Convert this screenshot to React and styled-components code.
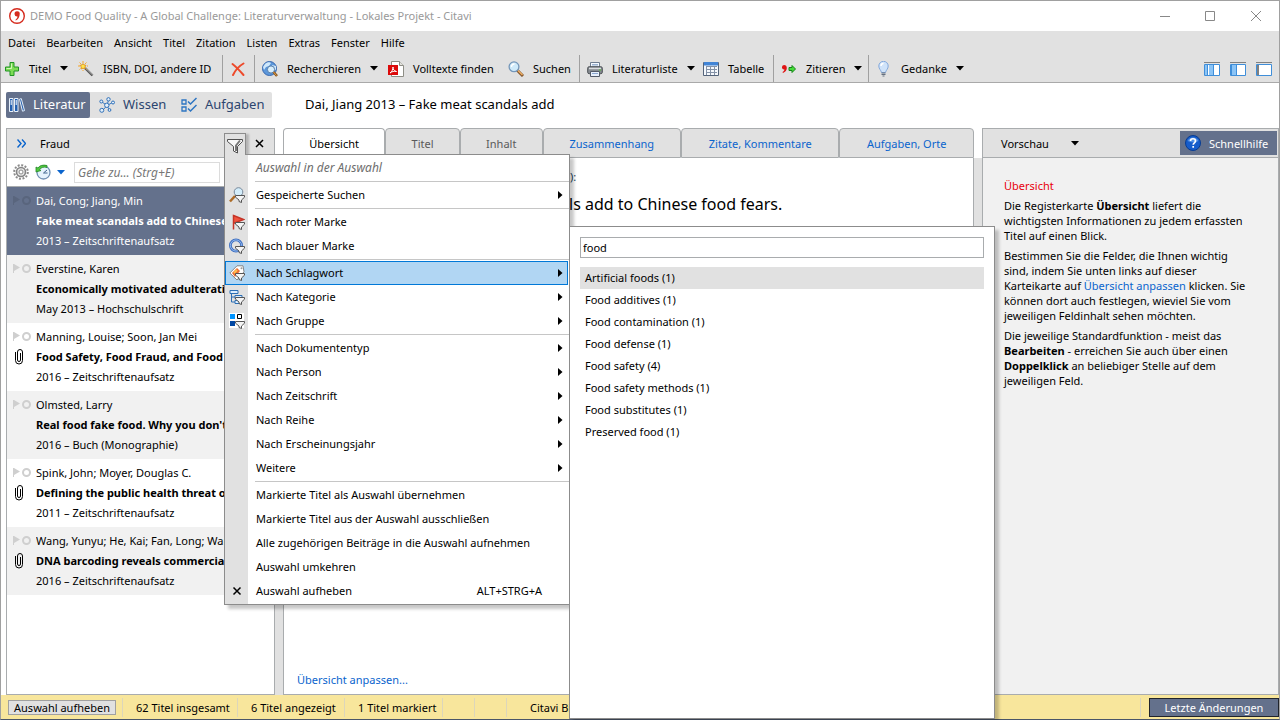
import React from "react";
import styled, { createGlobalStyle } from "styled-components";

const GlobalStyle = createGlobalStyle`
  * {
    box-sizing: border-box;
  }
  body {
    margin: 0;
    overflow: hidden;
    font-family: "Noto Sans", "Open Sans", sans-serif;
    font-size: 11px;
    line-height: 15px;
    color: #000;
    background: #fff;
  }
  button, input {
    font: inherit;
    color: inherit;
    margin: 0;
    padding: 0;
    border: 0;
    background: none;
    text-align: left;
    white-space: nowrap;
  }
  svg {
    display: block;
    flex: none;
  }
  a {
    color: #0a64cd;
    text-decoration: none;
  }
`;

const Window = styled.div`
  display: flex;
  flex-direction: column;
  height: 100vh;
  border: 1px solid #a0a0a0;
  border-bottom-color: #4a5568;
`;

const TitleBar = styled.header`
  display: flex;
  align-items: center;
  gap: 4px;
  flex: 0 0 30px;
  padding: 0 17px 1px 7px;
  color: #999;
`;

const WindowTitle = styled.h1`
  flex: 1;
  margin: 0;
  font-size: 11px;
  font-weight: 400;
`;

const WindowButtons = styled.div`
  display: flex;
  gap: 34px;
`;

const MenuBar = styled.nav`
  display: flex;
  align-items: center;
  gap: 11px;
  flex: 0 0 24px;
  padding: 0 0 2px 7px;
  background: #e1e1e1;
`;

const ToolBar = styled.div`
  display: flex;
  align-items: center;
  flex: 0 0 28px;
  padding: 0 7px 0 3px;
  background: #e1e1e1;
  border-bottom: 1px solid #a9a9a9;
`;

const Tool = styled.button`
  display: flex;
  align-items: center;
  gap: 9px;
  flex: 0 0 ${(p) => p.$width}px;
  height: 26px;
`;

const ToolSeparator = styled.span`
  align-self: stretch;
  width: 1px;
  margin-right: 7px;
  background: #a0a0a0;
`;

const LayoutButtons = styled.div`
  display: flex;
  gap: 10px;
  margin-left: auto;
`;

const NavRow = styled.div`
  display: flex;
  align-items: center;
  flex: 0 0 45px;
  padding: 0 5px 2px;
`;

const Switcher = styled.div`
  display: flex;
  width: 266px;
  height: 26px;
  border-radius: 2px;
  background: #e1e1e1;
`;

const SwitchButton = styled.button`
  display: flex;
  align-items: center;
  gap: 8px;
  flex: 0 0 ${(p) => p.$width}px;
  padding-left: ${(p) => (p.$active ? 3 : 9)}px;
  border-radius: 2px;
  font-size: 13px;
  color: ${(p) => (p.$active ? "#fff" : "#2c456f")};
  background: ${(p) => (p.$active ? "#64718c" : "transparent")};
`;

const RecordHeading = styled.h2`
  margin: 0 0 0 33px;
  font-size: 13px;
  font-weight: 400;
`;

const Workspace = styled.div`
  display: flex;
  flex: 1;
  min-height: 0;
  padding-left: 5px;
`;

const Sidebar = styled.aside`
  display: flex;
  flex-direction: column;
  flex: 0 0 269px;
  border: 1px solid #a9acae;
`;

const PanelHeader = styled.div`
  display: flex;
  align-items: center;
  flex: 0 0 29px;
  background: #e1e1e1;
  border-bottom: 1px solid #a9acae;
`;

const SidebarHeader = styled(PanelHeader)`
  padding: 0 10px;
`;

const SidebarTitle = styled.span`
  flex: 1;
  margin-left: 14px;
`;

const FilterAnchor = styled.div`
  position: relative;
  z-index: 5;
  align-self: flex-end;
  margin-right: 9px;
`;

const FilterButton = styled.button`
  display: flex;
  align-items: center;
  justify-content: center;
  width: 22px;
  height: 24px;
  border: 1px solid #8c8c8c;
  border-bottom: 0;
  background: #e1e1e1;
  box-shadow: 3px 1px 2px rgba(0, 0, 0, 0.2);
`;

const SearchRow = styled.div`
  display: flex;
  align-items: center;
  gap: 6px;
  flex: 0 0 29px;
  padding: 0 6px;
  border-bottom: 1px solid #a9acae;
`;

const GoTo = styled.input`
  width: 146px;
  height: 21px;
  margin-left: 3px;
  padding: 0 3px;
  border: 1px solid #dcdcdc;
  font-size: 12px;
  font-style: italic;
  background: #fff;
  &::placeholder {
    color: #777;
    opacity: 1;
  }
`;

const TitleList = styled.ul`
  flex: 1;
  margin: 0;
  padding: 0;
  list-style: none;
  overflow: hidden;
`;

const TitleItem = styled.li`
  display: grid;
  grid-template-columns: 23px 1fr;
  padding: 4px 0 4px 6px;
  line-height: 20px;
  color: ${(p) => (p.$selected ? "#fff" : "#000")};
  background: ${(p) => (p.$selected ? "#64718c" : p.$shaded ? "#f1f1f1" : "#fff")};
`;

const Marks = styled.div`
  display: flex;
  flex-direction: column;
  gap: 6px;
  padding-top: 4px;
`;

const TitleText = styled.div`
  min-width: 0;
  overflow: hidden;
  white-space: nowrap;
`;

const Strong = styled.div`
  font-weight: 700;
`;

const Splitter = styled.div`
  flex: 0 0 8px;
  margin-top: 30px;
  background: #e1e1e1;
`;

const Main = styled.main`
  display: flex;
  flex-direction: column;
  flex: 1;
  min-width: 0;
`;

const Tabs = styled.div`
  display: flex;
  flex: 0 0 30px;
`;

const Tab = styled.button`
  flex: ${(p) => p.$grow} 1 0;
  border: 1px solid #a9acae;
  border-bottom-color: ${(p) => (p.$active ? "#fff" : "#a9acae")};
  border-radius: 4px 4px 0 0;
  text-align: center;
  color: ${(p) => (p.$active ? "#000" : p.$link ? "#0a64cd" : "#5a5a5a")};
  background: ${(p) => (p.$active ? "#fff" : "#e1e1e1")};
`;

const TabBody = styled.div`
  display: flex;
  flex-direction: column;
  justify-content: space-between;
  flex: 1;
  padding: 11px 13px 7px;
  border: 1px solid #a9acae;
  border-top: 0;
`;

const RecordType = styled.div`
  margin-bottom: 8px;
  color: #1c3f5c;
  white-space: nowrap;
`;

const RecordTitle = styled.div`
  font-size: 16px;
  line-height: 24px;
  white-space: nowrap;
`;

const HelpPanel = styled.aside`
  display: flex;
  flex-direction: column;
  flex: 0 0 297px;
  border: 1px solid #a9acae;
  background: #f1f1f1;
`;

const PreviewButton = styled.button`
  display: flex;
  align-items: center;
  gap: 22px;
  margin-left: 18px;
`;

const HelpButton = styled.button`
  display: flex;
  align-items: center;
  gap: 8px;
  width: 97px;
  height: 24px;
  margin: 0 1px 0 auto;
  padding-left: 5px;
  color: #fff;
  background: #64718c;
`;

const HelpText = styled.div`
  padding: 20px 25px 0 21px;
  h3 {
    margin: 0 0 5px;
    font-size: 11px;
    font-weight: 400;
    color: #e8000b;
  }
  p {
    margin: 0 0 5px;
  }
`;

const StatusBar = styled.footer`
  display: flex;
  align-items: center;
  flex: 0 0 24px;
  background: #f8e69c;
`;

const ClearButton = styled.button`
  width: 108px;
  height: 15px;
  margin: 0 6px 0 7px;
  border: 1px solid #a0a0a0;
  line-height: 13px;
  text-align: center;
  background: #e1e1e1;
`;

const StatusCell = styled.span`
  flex: 0 0 ${(p) => p.$width}px;
  height: 19px;
  padding-left: ${(p) => p.$indent || 13}px;
  border-left: 1px solid #dcd6bb;
  line-height: 19px;
  white-space: nowrap;
`;

const StatusSpacer = styled.span`
  flex: 1;
  height: 19px;
  margin-right: 8px;
  border-right: 1px solid #dcd6bb;
`;

const RecentButton = styled.button`
  width: 130px;
  height: 19px;
  border: 1px solid #20242c;
  text-align: center;
  color: #fff;
  background: #64718c;
`;

const Popup = styled.div`
  position: absolute;
  border: 1px solid #8c8c8c;
  background: #fff;
  box-shadow: 4px 4px 3px rgba(0, 0, 0, 0.22);
`;

const Menu = styled(Popup)`
  top: 21px;
  left: 0;
  width: 346px;
  padding: 1px 0;
  background: linear-gradient(90deg, #e1e1e1 23px, #fff 23px);
`;

/* Hides the menu border below the open button */
const MenuJoint = styled.span`
  position: absolute;
  top: -1px;
  left: 0;
  width: 20px;
  height: 1px;
  background: #e1e1e1;
`;

const MenuItem = styled.button`
  display: grid;
  grid-template-columns: 31px 1fr auto 9px;
  align-items: center;
  width: 343px;
  height: 24px;
  padding: 0 1px 2px 0;
  color: ${(p) => (p.$muted ? "#6d6d6d" : "#000")};
  font-size: ${(p) => (p.$muted ? 12 : 11)}px;
  font-style: ${(p) => (p.$muted ? "italic" : "normal")};
  background: ${(p) => (p.$active ? "#b1d6f3" : "transparent")};
  outline: ${(p) => (p.$active ? "1px solid #0078d7" : "none")};
  outline-offset: -1px;
`;

const MenuIcon = styled.span`
  padding: 1px 0 0 4px;
`;

const Shortcut = styled.span`
  padding-right: 16px;
`;

const MenuLine = styled.hr`
  height: 1px;
  margin: 1px 0 1px 30px;
  border: 0;
  background: #c6c6c6;
`;

const Submenu = styled(Popup)`
  top: 71px;
  left: 344px;
  width: 426px;
  min-height: 493px;
  padding: 10px;
`;

const KeywordInput = styled.input`
  width: 100%;
  height: 21px;
  padding: 0 2px;
  border: 1px solid #a9acae;
`;

const KeywordList = styled.ul`
  margin: 9px 0 0;
  padding: 0;
  list-style: none;
`;

const Keyword = styled.li`
  height: 22px;
  padding-left: 5px;
  line-height: 22px;
  background: ${(p) => (p.$active ? "#e1e1e1" : "#fff")};
`;

const Icon = ({ size = 16, children }) => (
  <svg width={size} height={size} viewBox="0 0 16 16" fill="none" aria-hidden="true">
    {children}
  </svg>
);

const Arrow = ({ color = "#000" }) => (
  <svg width="8" height="5" viewBox="0 0 8 5" aria-hidden="true">
    <path d="M0 0h8L4 4.5z" fill={color} />
  </svg>
);

const Funnel = () => (
  <path d="M6.5 8.5h9v1.7L12.500 13v2.500l-2.500-1V13L6.500 10.200z" fill="#f4f4f4" stroke="#555" />
);

const LogoIcon = () => (
  <svg width="18" height="18" viewBox="0 0 18 18" fill="none" aria-hidden="true">
    <circle cx="9" cy="9" r="7.3" stroke="#d52b1e" strokeWidth="1.4" />
    <path d="M9 4.2a2.6 2.6 0 0 1 2.7 2.9c0 3-1.4 5.3-3.9 6.5l-.4-.7c1.3-1 2-2.1 2.1-3.3A2.7 2.7 0 1 1 9 4.2z" fill="#d52b1e" />
  </svg>
);

const PlusIcon = () => (
  <Icon>
    <path d="M6 1.500h4v4.500h4.500v4H10v4.500H6V10H1.500V6H6z" fill="#7ddc55" stroke="#209425" />
    <path d="M7.500 2.500v5h-5" stroke="#d2f7b8" />
  </Icon>
);

const WandIcon = () => (
  <Icon>
    <path d="M7 7l7.500 7.500" stroke="#555" strokeWidth="2.400" />
    <path d="M7 6.400l7.500 7.500" stroke="#b9b9b9" />
    <path d="M5 0v10M0 5h10M1.500 1.500l7 7M8.500 1.500l-7 7" stroke="#f6a72d" strokeDasharray="2 1" />
    <path d="M5 2.500L6 4l2 .300L6.800 6 7 8 5 7.200 3 8l.300-2L2 4.300 4 4z" fill="#ffe34d" stroke="#d27a0c" strokeWidth=".600" />
  </Icon>
);

const DeleteIcon = () => (
  <Icon>
    <path d="M2.500 3C6 5.500 10 10 13.500 14M13.500 2.500C9 5 5 10 3 14" stroke="#ed4a2b" strokeWidth="2" strokeLinecap="round" />
  </Icon>
);

const GlobeIcon = () => (
  <Icon>
    <circle cx="7.500" cy="7.500" r="7" fill="#5c97da" stroke="#3867ae" />
    <path d="M3 3c2-2 5-2 6-1L7 5 4 6 2 9 1 6zM10 4l4 1v4l-3-1z" fill="#cfe8fb" />
    <circle cx="9" cy="8.500" r="3.600" fill="#d9effc" stroke="#587da9" />
    <path d="M11.500 11l3.500 4" stroke="#845219" strokeWidth="2.500" />
    <path d="M11.500 11l3 3.500" stroke="#e8a24b" />
  </Icon>
);

const PdfIcon = () => (
  <Icon>
    <path d="M3.500 .500h8l4 4v11h-12z" fill="#fff" stroke="#8e8e86" />
    <path d="M11.500 .500v4h4" fill="#e3e3de" stroke="#8e8e86" />
    <path d="M0 4h10v10H0z" fill="#dc0a0a" />
    <path d="M2 12c2-1.500 3-3.500 3-6 0 2.500 1 4 3.500 4.500C6 10 4 10.500 2 12z" stroke="#fff" />
  </Icon>
);

const SearchIcon = () => (
  <Icon>
    <path d="M9 9l6 6" stroke="#80542b" strokeWidth="3" />
    <path d="M9.500 9l5 5" stroke="#efb066" strokeWidth="1.400" />
    <circle cx="6" cy="5.800" r="4.900" fill="#cfeafa" stroke="#7496b9" strokeWidth="1.300" />
    <path d="M3.500 6c0-2 1.500-3 3-3" stroke="#fff" strokeWidth="1.300" />
  </Icon>
);

const PrinterIcon = () => (
  <Icon>
    <path d="M3.500 1.500h9v5h-9z" fill="#f4f9ff" stroke="#6f7d91" />
    <path d="M5 3.500h6M5 5h6" stroke="#9cb3d1" />
    <rect x=".7" y="5.700" width="14.600" height="7" rx="1.500" fill="#868b91" stroke="#4d5156" />
    <path d="M2 7.500h12" stroke="#dadde0" strokeWidth="1.500" />
    <path d="M12 9h2" stroke="#4fc52d" />
    <path d="M3.500 10.500h9v5h-9z" fill="#e5eefb" stroke="#525a68" />
    <path d="M5 12.500h6" stroke="#8ba7cf" />
  </Icon>
);

const TableIcon = () => (
  <Icon>
    <path d="M.500 1.500h15v13H.500z" fill="#f5f8fc" stroke="#53637a" />
    <path d="M1 1h14v3.500H1z" fill="#4184d6" />
    <path d="M3 5.500h11M3 8.500h11M3 11.500h11M3.500 5v9M7.500 5v9M11.500 5v9" stroke="#8492a7" />
  </Icon>
);

const CiteIcon = () => (
  <Icon>
    <path d="M3 4c1.800 0 2.800 1.200 2.800 3C5.800 9.300 4.500 11 2 12l-.500-1c1.300-.700 1.900-1.500 1.900-2.500A2.200 2.200 0 1 1 3 4z" fill="#df1515" />
    <path d="M8 6.500h3v-2L14.500 8 11 11.500v-2H8z" fill="#46dc39" stroke="#138416" />
  </Icon>
);

const BulbIcon = () => (
  <Icon>
    <path d="M5.500 11.500C5 9 2.800 8 2.800 5a4.700 4.700 0 0 1 9.400 0c0 3-2.200 4-2.700 6.500z" fill="#cfe3fa" stroke="#84a9dc" />
    <path d="M5 5c0-1.500 1-2.500 2.500-2.500" stroke="#fff" strokeWidth="1.500" />
    <path d="M5.500 12h4M5.500 13.500h4M6.500 15h2" stroke="#657080" />
  </Icon>
);

const LayoutIcon = ({ columns }) => (
  <Icon>
    <path d="M.500 3.500h15v11H.500z" fill="#fff" stroke="#3f8ed9" />
    <path d="M0 1.500h16" stroke="#808080" />
    <path d="M1 2.500h14" stroke="#e1e1e1" />
    {columns === 3 && <path d="M1 4h3v10H1zM5 4h4v10H5z" fill="#8bc4f6" />}
    {columns === 3 && <path d="M3.500 4v10M9.500 4v10" stroke="#3f8ed9" />}
    {columns === 2 && <path d="M2 4h4v10H2z" fill="#8bc4f6" />}
    {columns === 2 && <path d="M1.500 4v10M6.500 4v10" stroke="#3f8ed9" />}
    {columns === 1 && <path d="M2 4v10" stroke="#808080" strokeWidth="2" />}
  </Icon>
);

const BooksIcon = () => (
  <Icon>
    <path d="M.500 1.500H4v13H.500zM5.500 1.500H9v13H5.500z" fill="#245fae" stroke="#e6f0fb" />
    <path d="M10.500 2.200l1.800-.600 3.200 12-2 .600z" fill="#245fae" stroke="#e6f0fb" />
    <path d="M2.200 3v5M7.200 3v5" stroke="#fff" />
  </Icon>
);

const KnowledgeIcon = () => (
  <Icon>
    <path d="M3 5l5 3.500L9.500 3M8 8.500l5.500-3M8 8.500L4 13M8 8.500l2 4" stroke="#3c79bd" />
    <g fill="#e4f0fa" stroke="#2f70b9">
      <circle cx="2.300" cy="4.500" r="1.500" />
      <circle cx="9.500" cy="2.300" r="1.700" />
      <circle cx="14" cy="5.500" r="1.500" />
      <circle cx="7.800" cy="8.300" r="2.200" />
      <circle cx="2.800" cy="13.300" r="2" />
      <circle cx="10.500" cy="13" r="1.400" />
    </g>
  </Icon>
);

const TasksIcon = () => (
  <Icon>
    <path d="M1 3h4v4H1zM1 10h4v4H1z" stroke="#2d75c2" strokeWidth="1.300" />
    <path d="M7 4.500l2.500 2.500L15.500 1M7 11.500l2.500 2.500 6-6" stroke="#2d75c2" strokeWidth="1.500" />
  </Icon>
);

const GearIcon = () => (
  <Icon>
    <circle cx="8" cy="8" r="6.800" stroke="#8b8b8b" strokeWidth="2" strokeDasharray="2 1.560" />
    <circle cx="8" cy="8" r="4.500" fill="#e7e7e7" stroke="#858585" strokeWidth="1.600" />
    <circle cx="8" cy="8" r="2" fill="#fff" stroke="#8b8b8b" />
  </Icon>
);

const HistoryIcon = () => (
  <Icon>
    <circle cx="8.500" cy="8.500" r="6.500" fill="#e5f3fd" stroke="#7191b4" strokeWidth="1.300" />
    <path d="M8.500 9l3.500-3M8.500 9h4" stroke="#41668e" />
    <path d="M12 1.500C8 .500 4.500 1.500 3 4L1 3v5l5-1.500-1.500-1C6 3.500 9 2.500 12 3.500z" fill="#51c83d" stroke="#24862a" strokeWidth=".800" />
  </Icon>
);

const FilterIcon = () => (
  <Icon>
    <path d="M.500 1.500h15v2l-5 5V15l-4-2V8.500l-6-5z" fill="#f7f7f7" stroke="#505050" />
    <path d="M13 2.500L9 7.500V13" stroke="#777" strokeWidth="2" />
  </Icon>
);

const CloseIcon = () => (
  <svg width="9" height="9" viewBox="0 0 9 9" aria-hidden="true">
    <path d="M1 1l7 7M8 1L1 8" stroke="#000" strokeWidth="1.500" />
  </svg>
);

const HelpIcon = () => (
  <Icon>
    <circle cx="8" cy="8" r="7.500" fill="#165ccb" stroke="#073c93" />
    <path d="M2.500 6a6 6 0 0 1 11 0c-3 1.500-7 2-11 0z" fill="#6ca7ef" opacity=".7" />
    <path d="M5.500 6c0-3 5-3 5 0 0 2-2.300 1.700-2.300 3.800M8.200 11v1.800" stroke="#fff" strokeWidth="1.700" />
  </Icon>
);

const SavedSearchIcon = () => (
  <Icon>
    <path d="M6 9l-5 5.500" stroke="#ad6c27" strokeWidth="2.500" />
    <circle cx="9.500" cy="5" r="4.300" fill="#d3edfa" stroke="#77889b" />
    <Funnel />
  </Icon>
);

const RedFlagIcon = () => (
  <Icon>
    <path d="M4.500 1.500v14M4.500 1.500l10 4-10 4z" fill="#f0533e" stroke="#c63427" strokeWidth="1.500" />
    <Funnel />
  </Icon>
);

const BlueMarkIcon = () => (
  <Icon>
    <circle cx="7" cy="7.500" r="5.600" stroke="#3f6fc0" strokeWidth="2.800" />
    <circle cx="7" cy="7.500" r="5.600" stroke="#92b9ef" />
    <Funnel />
  </Icon>
);

const KeywordIcon = () => (
  <Icon>
    <path d="M.800 8L8 .800h6l1 6L8 15z" fill="#fff" stroke="#858585" />
    <path d="M3 8l5-5 3 3-5 6z" fill="#f06b31" />
    <path d="M5 8l3-3" stroke="#ffc04d" strokeWidth="2" />
    <circle cx="12.500" cy="3.300" r="1" fill="#999" />
    <Funnel />
  </Icon>
);

const CategoryIcon = () => (
  <Icon>
    <path d="M1 1.500h8v3H1zM6 6.500h7v3H6zM6 11.500h6v3H6z" fill="#dceeff" stroke="#2c6fb5" />
    <path d="M2.500 5v8H6M2.500 8H6" stroke="#2c6fb5" />
    <Funnel />
  </Icon>
);

const GroupIcon = () => (
  <Icon>
    <path d="M0 0h15v15H0z" fill="#fff" />
    <path d="M1 1h5v5H1z" fill="#0094ff" />
    <path d="M8.500 1.500h4v4h-4z" stroke="#000" />
    <path d="M1 8h5v5H1z" fill="#0047a3" />
    <Funnel />
  </Icon>
);

const ClearIcon = () => (
  <Icon>
    <path d="M4.500 4.500l7 7M11.500 4.500l-7 7" stroke="#000" strokeWidth="1.500" />
  </Icon>
);

const MarkIcon = ({ selected }) => (
  <svg width="20" height="11" viewBox="0 0 20 11" fill="none" aria-hidden="true">
    <path d="M.500 1v9" stroke={selected ? "#59657d" : "#cfcfcf"} />
    <path d="M1 1l6 3.500L1 8z" fill={selected ? "#59657d" : "#cfcfcf"} />
    <circle cx="13.500" cy="5.500" r="3.500" stroke={selected ? "#59657d" : "#cfcfcf"} strokeWidth="2" />
  </svg>
);

const ClipIcon = () => (
  <svg width="12" height="17" viewBox="0 0 12 17" fill="none" aria-hidden="true">
    <path d="M2.500 4v8.500a3.500 3.500 0 0 0 7 0V4a2.500 2.500 0 0 0-5 0v8a1.500 1.500 0 0 0 3 0V5" stroke="#000" />
  </svg>
);

const menus = ["Datei", "Bearbeiten", "Ansicht", "Titel", "Zitation", "Listen", "Extras", "Fenster", "Hilfe"];

const tools = [
  { label: "Titel", icon: <PlusIcon />, width: 74, arrow: true },
  { label: "ISBN, DOI, andere ID", icon: <WandIcon />, width: 144 },
  { separator: true },
  { name: "Löschen", icon: <DeleteIcon />, width: 24 },
  { separator: true },
  { label: "Recherchieren", icon: <GlobeIcon />, width: 126, arrow: true },
  { label: "Volltexte finden", icon: <PdfIcon />, width: 120 },
  { label: "Suchen", icon: <SearchIcon />, width: 71 },
  { separator: true },
  { label: "Literaturliste", icon: <PrinterIcon />, width: 116, arrow: true },
  { label: "Tabelle", icon: <TableIcon />, width: 70 },
  { separator: true },
  { label: "Zitieren", icon: <CiteIcon />, width: 87, arrow: true },
  { separator: true },
  { label: "Gedanke", icon: <BulbIcon />, width: 96, arrow: true },
];

const titles = [
  { author: "Dai, Cong; Jiang, Min", title: "Fake meat scandals add to Chinese food", info: "2013 – Zeitschriftenaufsatz" },
  { author: "Everstine, Karen", title: "Economically motivated adulteration", info: "May 2013 – Hochschulschrift" },
  { author: "Manning, Louise; Soon, Jan Mei", title: "Food Safety, Food Fraud, and Food", info: "2016 – Zeitschriftenaufsatz", clip: true },
  { author: "Olmsted, Larry", title: "Real food fake food. Why you don't", info: "2016 – Buch (Monographie)" },
  { author: "Spink, John; Moyer, Douglas C.", title: "Defining the public health threat of", info: "2011 – Zeitschriftenaufsatz", clip: true },
  { author: "Wang, Yunyu; He, Kai; Fan, Long; Wang", title: "DNA barcoding reveals commercial", info: "2016 – Zeitschriftenaufsatz", clip: true },
];

const tabs = [
  { label: "Übersicht", grow: 102, active: true },
  { label: "Titel", grow: 74 },
  { label: "Inhalt", grow: 82 },
  { label: "Zusammenhang", grow: 139, link: true },
  { label: "Zitate, Kommentare", grow: 159, link: true },
  { label: "Aufgaben, Orte", grow: 135, link: true },
];

const menuItems = [
  { label: "Auswahl in der Auswahl", muted: true },
  { line: true },
  { label: "Gespeicherte Suchen", icon: <SavedSearchIcon />, sub: true },
  { line: true },
  { label: "Nach roter Marke", icon: <RedFlagIcon /> },
  { label: "Nach blauer Marke", icon: <BlueMarkIcon /> },
  { line: true },
  { label: "Nach Schlagwort", icon: <KeywordIcon />, sub: true, active: true },
  { label: "Nach Kategorie", icon: <CategoryIcon />, sub: true },
  { label: "Nach Gruppe", icon: <GroupIcon />, sub: true },
  { line: true },
  { label: "Nach Dokumententyp", sub: true },
  { label: "Nach Person", sub: true },
  { label: "Nach Zeitschrift", sub: true },
  { label: "Nach Reihe", sub: true },
  { label: "Nach Erscheinungsjahr", sub: true },
  { label: "Weitere", sub: true },
  { line: true },
  { label: "Markierte Titel als Auswahl übernehmen" },
  { label: "Markierte Titel aus der Auswahl ausschließen" },
  { label: "Alle zugehörigen Beiträge in die Auswahl aufnehmen" },
  { label: "Auswahl umkehren" },
  { label: "Auswahl aufheben", icon: <ClearIcon />, shortcut: "ALT+STRG+A" },
];

const keywords = [
  "Artificial foods (1)",
  "Food additives (1)",
  "Food contamination (1)",
  "Food defense (1)",
  "Food safety (4)",
  "Food safety methods (1)",
  "Food substitutes (1)",
  "Preserved food (1)",
];

const FilterMenu = () => (
  <Menu>
    <MenuJoint />
    {menuItems.map((item, i) =>
      item.line ? (
        <MenuLine key={i} />
      ) : (
        <MenuItem key={i} $muted={item.muted} $active={item.active}>
          <MenuIcon>{item.icon}</MenuIcon>
          <span>{item.label}</span>
          <Shortcut>{item.shortcut}</Shortcut>
          {item.sub && (
            <svg width="5" height="9" viewBox="0 0 5 9" aria-hidden="true">
              <path d="M0 1l4.500 4L0 9z" fill="#000" />
            </svg>
          )}
        </MenuItem>
      )
    )}
    <Submenu>
      <KeywordInput aria-label="Schlagwort" defaultValue="food" />
      <KeywordList>
        {keywords.map((word, i) => (
          <Keyword key={word} $active={i === 0}>
            {word}
          </Keyword>
        ))}
      </KeywordList>
    </Submenu>
  </Menu>
);

const App = () => {
  return (
    <>
      <GlobalStyle />
      <Window>
        <TitleBar>
          <LogoIcon />
          <WindowTitle>DEMO Food Quality - A Global Challenge: Literaturverwaltung - Lokales Projekt - Citavi</WindowTitle>
          <WindowButtons>
            <button aria-label="Minimieren">
              <svg width="12" height="12" viewBox="0 0 12 12"><path d="M1 6.500h10" stroke="#888" /></svg>
            </button>
            <button aria-label="Maximieren">
              <svg width="11" height="12" viewBox="0 0 11 12"><path d="M.500 1.500h9v9h-9z" fill="none" stroke="#888" /></svg>
            </button>
            <button aria-label="Schließen">
              <svg width="12" height="12" viewBox="0 0 12 12"><path d="M1 1l10 10M11 1L1 11" stroke="#888" /></svg>
            </button>
          </WindowButtons>
        </TitleBar>
        <MenuBar>
          {menus.map((m) => (
            <button key={m}>{m}</button>
          ))}
        </MenuBar>
        <ToolBar>
          {tools.map((t, i) =>
            t.separator ? (
              <ToolSeparator key={i} />
            ) : (
              <Tool key={i} $width={t.width} aria-label={t.name}>
                {t.icon}
                {t.label}
                {t.arrow && <Arrow />}
              </Tool>
            )
          )}
          <LayoutButtons>
            <button aria-label="Drei Spalten"><LayoutIcon columns={3} /></button>
            <button aria-label="Zwei Spalten"><LayoutIcon columns={2} /></button>
            <button aria-label="Eine Spalte"><LayoutIcon columns={1} /></button>
          </LayoutButtons>
        </ToolBar>
        <NavRow>
          <Switcher>
            <SwitchButton $active $width={84}><BooksIcon />Literatur</SwitchButton>
            <SwitchButton $width={82}><KnowledgeIcon />Wissen</SwitchButton>
            <SwitchButton $width={94}><TasksIcon />Aufgaben</SwitchButton>
          </Switcher>
          <RecordHeading>Dai, Jiang 2013 – Fake meat scandals add</RecordHeading>
        </NavRow>
        <Workspace>
          <Sidebar>
            <SidebarHeader>
              <svg width="9" height="9" viewBox="0 0 9 9" fill="none" aria-hidden="true">
                <path d="M.500 .500l3.500 4-3.500 4M5 .500l3.500 4-3.500 4" stroke="#0a64cd" strokeWidth="1.400" />
              </svg>
              <SidebarTitle>Fraud</SidebarTitle>
              <FilterAnchor>
                <FilterButton aria-label="Auswahl"><FilterIcon /></FilterButton>
                <FilterMenu />
              </FilterAnchor>
              <button aria-label="Auswahl schließen"><CloseIcon /></button>
            </SidebarHeader>
            <SearchRow>
              <button aria-label="Einstellungen"><GearIcon /></button>
              <button aria-label="Verlauf"><HistoryIcon /></button>
              <Arrow color="#0a64cd" />
              <GoTo aria-label="Gehe zu" placeholder="Gehe zu... (Strg+E)" />
            </SearchRow>
            <TitleList>
              {titles.map((t, i) => (
                <TitleItem key={t.author} $selected={i === 0} $shaded={i % 2 === 1}>
                  <Marks>
                    <MarkIcon selected={i === 0} />
                    {t.clip && <ClipIcon />}
                  </Marks>
                  <TitleText>
                    <div>{t.author}</div>
                    <Strong>{t.title}</Strong>
                    <div>{t.info}</div>
                  </TitleText>
                </TitleItem>
              ))}
            </TitleList>
          </Sidebar>
          <Splitter />
          <Main>
            <Tabs>
              {tabs.map((t) => (
                <Tab key={t.label} $grow={t.grow} $active={t.active} $link={t.link}>
                  {t.label}
                </Tab>
              ))}
            </Tabs>
            <TabBody>
              <div>
                <RecordType>Zeitschriftenaufsatz von Dai, Cong & Jiang, Min (2013):</RecordType>
                <RecordTitle>Dai, Jiang (2013) – Fake meat scandals add to Chinese food fears.</RecordTitle>
              </div>
              <a href="#uebersicht">Übersicht anpassen...</a>
            </TabBody>
          </Main>
          <Splitter />
          <HelpPanel>
            <PanelHeader>
              <PreviewButton>
                Vorschau
                <Arrow />
              </PreviewButton>
              <HelpButton>
                <HelpIcon />
                Schnellhilfe
              </HelpButton>
            </PanelHeader>
            <HelpText>
              <h3>Übersicht</h3>
              <p>
                Die Registerkarte <b>Übersicht</b> liefert die wichtigsten Informationen zu jedem erfassten Titel auf
                einen Blick.
              </p>
              <p>
                Bestimmen Sie die Felder, die Ihnen wichtig sind, indem Sie unten links auf dieser Karteikarte auf{" "}
                <a href="#uebersicht">Übersicht anpassen</a> klicken. Sie können dort auch festlegen, wieviel Sie vom
                jeweiligen Feldinhalt sehen möchten.
              </p>
              <p>
                Die jeweilige Standardfunktion - meist das <b>Bearbeiten</b> - erreichen Sie auch über einen{" "}
                <b>Doppelklick</b> an beliebiger Stelle auf dem jeweiligen Feld.
              </p>
            </HelpText>
          </HelpPanel>
        </Workspace>
        <StatusBar>
          <ClearButton>Auswahl aufheben</ClearButton>
          <StatusCell $width={115}>62 Titel insgesamt</StatusCell>
          <StatusCell $width={107}>6 Titel angezeigt</StatusCell>
          <StatusCell $width={98}>1 Titel markiert</StatusCell>
          <StatusCell $width={32} />
          <StatusCell $width={32} />
          <StatusCell $width={96} $indent={23}>Citavi Bibliothek</StatusCell>
          <StatusSpacer />
          <RecentButton>Letzte Änderungen</RecentButton>
        </StatusBar>
      </Window>
    </>
  );
};

export default App;
